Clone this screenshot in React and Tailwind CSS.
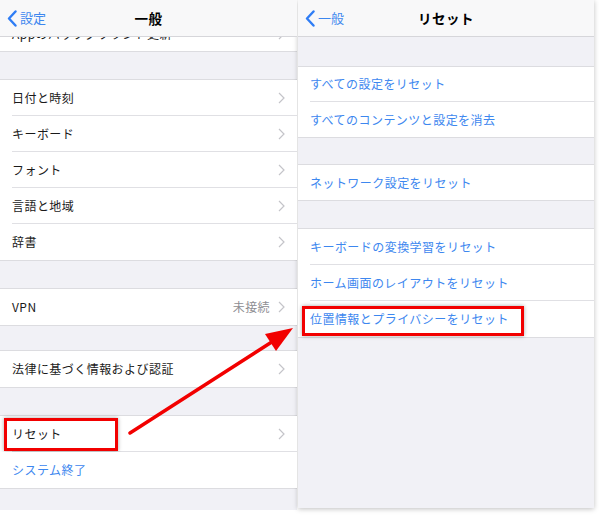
import React from 'react';

const font = { fontFamily: '"Noto Sans CJK JP", "Noto Sans", sans-serif' };

function Chevron() {
  return (
    <svg width="7" height="12" viewBox="0 0 7 12" className="shrink-0">
      <path d="M1 1l5 5-5 5" fill="none" stroke="#c4c4c9" strokeWidth="1.2" />
    </svg>
  );
}

function BackChevron() {
  return (
    <svg width="10" height="17" viewBox="0 0 10 17" className="shrink-0">
      <path d="M8.5 1.5L2 8.5l6.5 7" fill="none" stroke="#2f7df5" strokeWidth="2.4" strokeLinecap="round" strokeLinejoin="round" />
    </svg>
  );
}

function Row({ label, value, chevron = true, blue = false, last = false, h = 36, children }) {
  return (
    <div className="relative bg-white flex items-center" style={{ height: h }}>
      <div className={`flex-1 h-full ml-[12px] flex items-center pr-[12px] ${last ? '' : 'border-b border-[#e0e0e4]'}`}>
        <span className={`flex-1 text-[12px] tracking-[0.45px] ${blue ? 'text-[#3d87ef]' : 'text-[#1a1a1a]'}`}>{label}</span>
        {value && <span className="text-[12px] tracking-[0.4px] text-[#8e8e93] mr-[8px]">{value}</span>}
        {chevron && <Chevron />}
      </div>
      {children}
    </div>
  );
}

function Group({ children }) {
  return <div className="border-t border-b border-[#dcdce0]">{children}</div>;
}

function Nav({ back, title }) {
  return (
    <div className="relative z-10 h-[37px] shrink-0 bg-[#f8f8f9] border-b border-[#d6d6da] flex items-center px-[7px]">
      <div className="flex items-center gap-[3px]">
        <BackChevron />
        <span className="text-[13px] text-[#3d87ef]">{back}</span>
      </div>
      <div className="absolute inset-0 flex items-center justify-center pointer-events-none">
        <span className="text-[13.5px] font-bold text-black tracking-[0.5px]">{title}</span>
      </div>
    </div>
  );
}

export default function App() {
  return (
    <div className="relative w-[599px] h-[516px] bg-white flex items-start overflow-hidden" style={font}>
      {/* Left: 一般 */}
      <div className="w-[297px] h-[510px] bg-[#f1f1f6] flex flex-col shrink-0 overflow-hidden">
        <Nav back="設定" title="一般" />
        <div className="h-[15px] bg-white overflow-hidden border-b border-[#dcdce0]">
          <div className="h-[36px] -mt-[21px] flex items-center pl-[12px] pr-[12px]">
            <span className="flex-1 text-[12px] tracking-[0.45px] text-[#1a1a1a]">Appのバックグラウンド更新</span>
            <Chevron />
          </div>
        </div>
        <div className="h-[27px] shrink-0" />
        <Group>
          <Row label="日付と時刻" />
          <Row label="キーボード" />
          <Row label="フォント" />
          <Row label="言語と地域" />
          <Row label="辞書" last />
        </Group>
        <div className="h-[27px] shrink-0" />
        <Group>
          <Row label="VPN" value="未接続" last />
        </Group>
        <div className="h-[24px] shrink-0" />
        <Group>
          <Row label="法律に基づく情報および認証" last />
        </Group>
        <div className="h-[27px] shrink-0" />
        <Group>
          <Row label="リセット">
            <div className="absolute left-[4px] top-[2px] w-[114px] h-[33px] border-[3px] border-[#f20000] shadow-[0_0_4px_rgba(0,0,0,0.35)]" />
          </Row>
          <Row label="システム終了" chevron={false} blue last />
        </Group>
      </div>

      {/* Right: リセット */}
      <div className="ml-[1px] w-[296px] h-[508px] bg-[#f1f1f6] flex flex-col shrink-0 shadow-[0_1px_5px_rgba(0,0,0,0.25)]">
        <Nav back="一般" title="リセット" />
        <div className="h-[29px] shrink-0" />
        <Group>
          <Row label="すべての設定をリセット" chevron={false} blue h={35} />
          <Row label="すべてのコンテンツと設定を消去" chevron={false} blue last h={35} />
        </Group>
        <div className="h-[26px] shrink-0" />
        <Group>
          <Row label="ネットワーク設定をリセット" chevron={false} blue last h={35} />
        </Group>
        <div className="h-[27px] shrink-0" />
        <Group>
          <Row label="キーボードの変換学習をリセット" chevron={false} blue />
          <Row label="ホーム画面のレイアウトをリセット" chevron={false} blue />
          <Row label="位置情報とプライバシーをリセット" chevron={false} blue last>
            <div className="absolute left-[4px] top-[5px] w-[222px] h-[30px] border-[3px] border-[#f20000] shadow-[0_0_4px_rgba(0,0,0,0.35)]" />
          </Row>
        </Group>
      </div>

      {/* Arrow annotation */}
      <svg className="absolute left-0 top-0 pointer-events-none" width="599" height="516">
        <line x1="130" y1="433" x2="278" y2="338" stroke="#f20000" strokeWidth="3.5" strokeLinecap="round" />
        <polygon points="293,328 265,334 276,351" fill="#f20000" />
      </svg>
    </div>
  );
}
